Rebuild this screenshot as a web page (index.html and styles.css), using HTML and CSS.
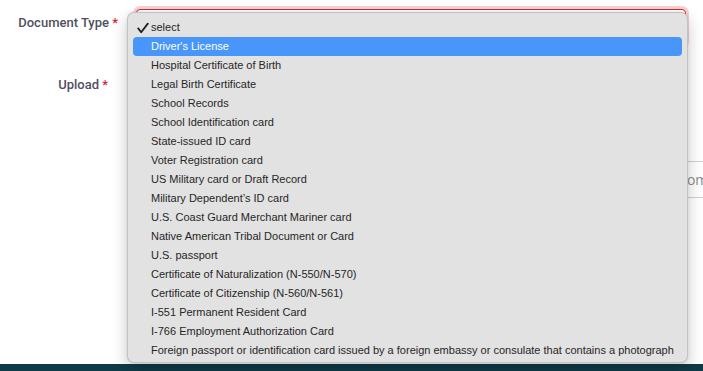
FILE: index.html
```html
<!DOCTYPE html>
<html lang="en">
<head>
<meta charset="utf-8">
<title>Document Type</title>
<link rel="stylesheet" href="styles.css">
</head>
<body>
<div class="page">
  <main class="form">
    <div class="row row-doc">
      <label class="lbl">Document Type <span class="req">*</span></label>
      <div class="select-box"></div>
    </div>
    <div class="row row-upload">
      <label class="lbl">Upload <span class="req">*</span></label>
      <div class="upload-area"></div>
    </div>
    <div class="row row-input">
      <div class="lbl-empty"></div>
      <div class="text-input"><span class="ti-text">From</span></div>
    </div>
  </main>
  <footer class="footer"></footer>

  <ul class="menu">
    <li class="item checked"><svg class="check" width="12" height="12" viewBox="0 0 12 12"><path d="M1.2 6.4 L4.2 10.2 L10.8 1.6" fill="none" stroke="#1e1e1e" stroke-width="1.8" stroke-linecap="round" stroke-linejoin="round"/></svg>select</li>
    <li class="item active">Driver's License</li>
    <li class="item">Hospital Certificate of Birth</li>
    <li class="item">Legal Birth Certificate</li>
    <li class="item">School Records</li>
    <li class="item">School Identification card</li>
    <li class="item">State-issued ID card</li>
    <li class="item">Voter Registration card</li>
    <li class="item">US Military card or Draft Record</li>
    <li class="item">Military Dependent’s ID card</li>
    <li class="item">U.S. Coast Guard Merchant Mariner card</li>
    <li class="item">Native American Tribal Document or Card</li>
    <li class="item">U.S. passport</li>
    <li class="item">Certificate of Naturalization (N-550/N-570)</li>
    <li class="item">Certificate of Citizenship (N-560/N-561)</li>
    <li class="item">I-551 Permanent Resident Card</li>
    <li class="item">I-766 Employment Authorization Card</li>
    <li class="item">Foreign passport or identification card issued by a foreign embassy or consulate that contains a photograph</li>
  </ul>
</div>
</body>
</html>
```

FILE: styles.css
```css
* { box-sizing: border-box; }
html, body { margin: 0; padding: 0; }
body {
  width: 703px;
  height: 371px;
  overflow: hidden;
  background: #ffffff;
}
.page {
  position: relative;
  width: 703px;
  height: 371px;
  display: flex;
  flex-direction: column;
}
.form {
  flex: 1;
  display: flex;
  flex-direction: column;
  padding-top: 9px;
}
.row {
  display: grid;
  grid-template-columns: 120px 1fr;
  column-gap: 16px;
}
.lbl {
  font-family: "Roboto", "Liberation Sans", sans-serif;
  font-size: 13px;
  font-weight: 500;
  color: #50505e;
  text-align: right;
  padding-top: 5px;
  line-height: 18px;
  padding-right: 2px;
}
.req { color: #d9232e; }
.select-box {
  height: 36px;
  width: 550px;
  border: 1px solid #cf2f36;
  border-radius: 4px;
  background: #fff;
  box-shadow: 0 0 0 3px rgba(220, 53, 69, 0.22);
}
.row-upload { margin-top: 31px; }
.row-upload .lbl { padding-right: 12px; padding-top: 0; }
.upload-area { height: 72px; }
.row-input { margin-top: 13px; }
.text-input {
  margin-left: 400px;
  width: 300px;
  height: 37px;
  border-top: 1px solid #d0d0d0;
  border-bottom: 1px solid #d0d0d0;
  border-left: 1px solid #d0d0d0;
  display: flex;
  align-items: center;
  padding-left: 137px;
  font-family: "Open Sans", "DejaVu Sans", sans-serif;
  font-size: 14px;
  color: #8c8c8c;
  white-space: nowrap;
}
.footer {
  height: 7px;
  background: #0f3a48;
}
.menu {
  position: absolute;
  left: 127px;
  top: 12px;
  width: 561px;
  height: 351px;
  margin: 0;
  padding: 5px 5px 4px;
  list-style: none;
  background: #e2e2e2;
  border: 1px solid rgba(0, 0, 0, 0.14);
  border-radius: 7px;
  box-shadow: 0 6px 16px rgba(0, 0, 0, 0.22), 0 0 3px rgba(0, 0, 0, 0.08);
  font-family: "Liberation Sans", "Arial", sans-serif;
  font-size: 11px;
  color: #262626;
}
.item {
  position: relative;
  height: 19px;
  line-height: 19px;
  padding-left: 18px;
  border-radius: 4px;
  white-space: nowrap;
}
.item.active {
  background: #4896fa;
  color: #ffffff;
}
.check {
  position: absolute;
  left: 4px;
  top: 4px;
}
```
